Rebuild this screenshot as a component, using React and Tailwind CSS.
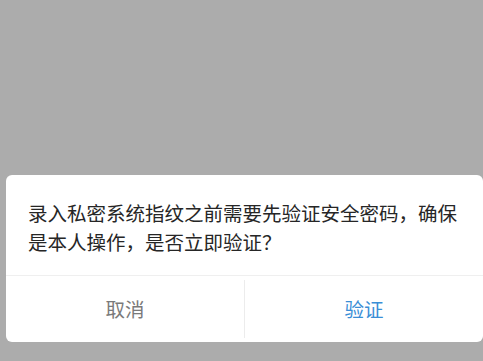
import React from 'react';

const App = () => {
  return (
    <div
      className="h-[361px] w-[483px] bg-[#acacac] flex flex-col justify-end pl-[6px] pb-[19px]"
      style={{ fontFamily: '"Noto Sans CJK SC", "Noto Sans", sans-serif' }}
    >
      {/* Confirm dialog */}
      <div className="bg-white rounded-[6px] flex flex-col">
        <p className="pl-[22px] pr-[14px] pt-[23px] pb-[19px] text-[19.5px] leading-[29px] text-[#262626]">
          录入私密系统指纹之前需要先验证安全密码，确保是本人操作，是否立即验证？
        </p>
        <div className="h-px bg-[#efefef]" />
        <div className="flex items-stretch h-[66px] py-[4px]">
          <button className="flex-1 flex items-center justify-center text-[19.5px] text-[#7a7a7a]">
            取消
          </button>
          <div className="w-px bg-[#ececec]" />
          <button className="flex-1 flex items-center justify-center text-[19.5px] text-[#3a8ed6]">
            验证
          </button>
        </div>
      </div>
    </div>
  );
};

export default App;
